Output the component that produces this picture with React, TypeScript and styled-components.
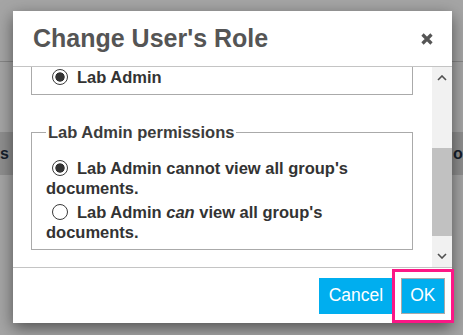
import React, { useLayoutEffect, useRef } from 'react';
import styled, { createGlobalStyle } from 'styled-components';

const GlobalStyle = createGlobalStyle`
  html, body {
    margin: 0;
    padding: 0;
  }
  body {
    font-family: "Liberation Sans", Arial, sans-serif;
  }
`;

const Page = styled.div`
  position: relative;
  width: 463px;
  height: 335px;
  overflow: hidden;
  background: #a5a5a5;
`;

const TopBar = styled.div`
  height: 61px;
  border-bottom: 1px solid #868686;
`;

const TableHead = styled.div`
  margin-top: 70px;
  height: 43px;
  background: #8e8e8e;
  display: flex;
  justify-content: space-between;
  align-items: center;
  font-size: 16px;
  font-weight: bold;
  color: #16202c;
`;

const HeadCell = styled.div<{ $width: number }>`
  width: ${(p) => p.$width}px;
  overflow: hidden;
  white-space: nowrap;
`;

const Modal = styled.div`
  position: absolute;
  left: 13px;
  top: 11px;
  width: 439px;
  height: 312px;
  background: #fff;
  box-shadow: 0 5px 15px rgba(0, 0, 0, 0.5);
  display: flex;
  flex-direction: column;
`;

const Header = styled.div`
  box-sizing: border-box;
  height: 56px;
  padding: 0 19px 0 20px;
  border-bottom: 1px solid #c4c4c4;
  display: flex;
  align-items: center;
  justify-content: space-between;
`;

const Title = styled.h4`
  margin: 0;
  font-size: 25px;
  font-weight: bold;
  color: #555;
`;

const CloseButton = styled.button`
  border: 0;
  padding: 0;
  background: none;
  display: flex;
  cursor: pointer;
`;

const Body = styled.div`
  height: 200px;
  display: flex;
`;

const ScrollArea = styled.div`
  position: relative;
  flex: 1;
  overflow: hidden;
  padding: 0 19px 0 18px;
`;

const Group = styled.fieldset`
  margin: 0 0 27px;
  padding: 0 14px 7px;
  border: 1px solid #aaa;
  min-width: 0;
`;

const Legend = styled.legend`
  padding: 0 2px;
  font-size: 16.5px;
  font-weight: bold;
  line-height: 20px;
  color: #3c3c3c;
`;

const Option = styled.label<{ $first?: boolean }>`
  display: block;
  margin-top: ${(p) => (p.$first ? 16 : 4)}px;
  font-size: 16.5px;
  font-weight: bold;
  line-height: 20px;
  color: #333;
`;

const Radio = styled.input`
  appearance: none;
  box-sizing: border-box;
  width: 16px;
  height: 16px;
  margin: 0 9px 0 6px;
  vertical-align: -2px;
  border: 1px solid #3a3a3a;
  border-radius: 50%;
  background: #fff;

  &:checked {
    background: radial-gradient(circle, #333 0 4.3px, #fff 5px);
  }
`;

const ScrollBar = styled.div`
  width: 20px;
  background: #f1f1f1;
  display: flex;
  flex-direction: column;
`;

const ScrollButton = styled.div`
  height: 22px;
  display: flex;
  align-items: center;
  justify-content: center;
`;

const Track = styled.div`
  flex: 1;
  padding-top: 59px;
`;

const Thumb = styled.div`
  height: 88px;
  background: #c1c1c1;
`;

const Footer = styled.div`
  box-sizing: border-box;
  height: 56px;
  border-top: 1px solid #c4c4c4;
  padding-right: 7px;
  display: flex;
  justify-content: flex-end;
  align-items: center;
  gap: 8px;
`;

const Button = styled.button<{ $focused?: boolean }>`
  height: 36px;
  padding: 0 8.5px;
  background: #00aeef;
  color: #fff;
  font-family: "Liberation Sans", Arial, sans-serif;
  font-size: 17.5px;
  border: 1px solid ${(p) => (p.$focused ? '#a9a9a9' : '#00aeef')};
  border-radius: 0;
  outline: ${(p) => (p.$focused ? '3px solid #fb1786' : 'none')};
  outline-offset: 6px;
  cursor: pointer;
`;

const Chevron = ({ down }: { down?: boolean }) => (
  <svg width="10" height="6" viewBox="0 0 10 6">
    <path
      d={down ? 'M1 1 L5 5 L9 1' : 'M1 5 L5 1 L9 5'}
      fill="none"
      stroke="#505050"
      strokeWidth="1.6"
    />
  </svg>
);

const CloseIcon = () => (
  <svg width="12" height="12" viewBox="0 0 12 12">
    <path d="M1.5 1.5 L10.5 10.5 M10.5 1.5 L1.5 10.5" stroke="#555" strokeWidth="3.2" />
  </svg>
);

const App = () => {
  const areaRef = useRef<HTMLDivElement>(null);
  const roleRef = useRef<HTMLFieldSetElement>(null);

  useLayoutEffect(() => {
    const area = areaRef.current;
    const role = roleRef.current;
    if (area && role) {
      area.scrollTop = role.offsetTop + role.offsetHeight - 28;
    }
  }, []);

  return (
    <Page>
      <GlobalStyle />
      <TopBar />
      <TableHead>
        <HeadCell $width={10}>s</HeadCell>
        <HeadCell $width={10}>or</HeadCell>
      </TableHead>

      <Modal>
        <Header>
          <Title>Change User's Role</Title>
          <CloseButton aria-label="Close">
            <CloseIcon />
          </CloseButton>
        </Header>

        <Body>
          <ScrollArea ref={areaRef}>
            <Group ref={roleRef} style={{ marginTop: 10 }}>
              <Legend>Role</Legend>
              <Option $first>
                <Radio type="radio" name="role" />
                Lab Member
              </Option>
              <Option>
                <Radio type="radio" name="role" defaultChecked />
                Lab Admin
              </Option>
            </Group>

            <Group>
              <Legend>Lab Admin permissions</Legend>
              <Option $first>
                <Radio type="radio" name="perm" defaultChecked />
                Lab Admin cannot view all group's documents.
              </Option>
              <Option>
                <Radio type="radio" name="perm" />
                Lab Admin <em>can</em> view all group's documents.
              </Option>
            </Group>
            <div style={{ height: 40 }} />
          </ScrollArea>

          <ScrollBar>
            <ScrollButton>
              <Chevron />
            </ScrollButton>
            <Track>
              <Thumb />
            </Track>
            <ScrollButton>
              <Chevron down />
            </ScrollButton>
          </ScrollBar>
        </Body>

        <Footer>
          <Button>Cancel</Button>
          <Button $focused>OK</Button>
        </Footer>
      </Modal>
    </Page>
  );
};

export default App;
